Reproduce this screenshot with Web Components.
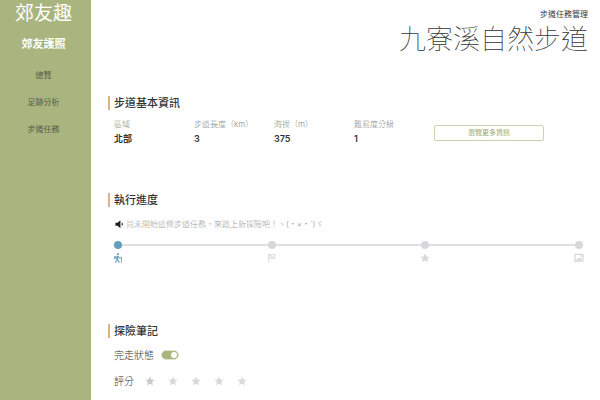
<!DOCTYPE html>
<html lang="zh-Hant">
<head>
<meta charset="utf-8">
<meta name="viewport" content="width=device-width, initial-scale=1">
<title>郊友趣</title>
<style>
body { margin: 0; font-family: Inter, "Noto Sans CJK TC", sans-serif; font-size: 8px; line-height: 12px; color: #333; background: #fff; --green: #a9b57f; }
</style>
</head>
<body>
<trail-app></trail-app>
<script>
const define = (name, html, setup) => customElements.define(name, class extends HTMLElement {
  connectedCallback() {
    if (this.shadowRoot) return;
    const t = document.createElement('template');
    t.innerHTML = html;
    this.attachShadow({ mode: 'open' }).append(t.content.cloneNode(true));
    if (setup) setup(this, this.shadowRoot);
  }
});

const icons = {
  sound: '<path d="M1 9h5l7-6v19l-7-6H1z"/><path d="M16 8q6 4.500 0 9z"/>',
  hiker: '<circle cx="12" cy="2.500" r="2.500"/><path d="M8 7q3-2 5 0l3 4h4v2h-5l-2-2-1 4 3 4 1 5h-2.500l-1-4-5-4zM3 8l4-1-1 8-4-1zM8 17l2 2-2 3-3 2-1-2 3-2zM19 9h2v15h-2z"/>',
  flag: '<path fill-rule="evenodd" d="M3 1h2.500v2H21l-3 5.500 3 5.500H5.500v9H3zM5.500 5v7H17l-2-3.500L17 5z"/><path d="M6 5h4v3.500H6zM10 8.500h4V12h-4z"/>',
  star: '<path d="M12 1l3.300 7.200 7.700.9-5.700 5.300 1.500 7.800L12 18.300l-6.800 3.900 1.500-7.800L1 9.100l7.700-.9z"/>',
  photo: '<path fill-rule="evenodd" d="M3 2h18q2 0 2 2v15q0 2-2 2H5l-4 2V4q0-2 2-2zM4 5v13h16V5z"/><path d="M4 19l6-8 3 3 3-3 4 7z"/><path d="M13 4h8v7l-3-3-3 3-1-1 3-3z"/>'
};
define('app-icon', `<style>
  :host { display: inline-flex; flex: none; width: 10px; height: 10px; }
  svg { width: 100%; height: 100%; fill: currentColor; }
</style><svg viewBox="0 0 24 24" aria-hidden="true"></svg>`,
  (host, root) => { root.querySelector('svg').innerHTML = icons[host.getAttribute('name')]; });

define('side-nav', `<style>
  :host { display: block; background: var(--green); text-align: center; padding-right: 4px; }
  .brand { color: #fff; font-size: 19px; line-height: 28px; }
  h2 { margin: 8px 0 0; color: #fff; font-size: 11px; line-height: 16px; font-weight: 700; }
  nav { display: grid; gap: 15px; margin-top: 17px; }
  a { color: #555a47; text-decoration: none; }
</style>
<div class="brand">郊友趣</div><h2>郊友護照</h2>
<nav><a href="#overview">總覽</a><a href="#analysis">足跡分析</a><a href="#tasks">步道任務</a></nav>`);

define('page-title', `<style>
  :host { display: block; text-align: right; }
  p { margin: 0; }
  h1 { margin: 0; font-size: 27px; line-height: 40px; font-weight: 100; }
</style><p>步道任務管理</p><h1><slot></slot></h1>`);

define('content-section', `<style>
  :host { display: block; }
  h2 { margin: 0; padding-left: 4px; border-left: 2px solid #e6b17e; font-size: 11px; line-height: 14px; font-weight: 500; }
  div { padding-left: 6px; }
</style><h2></h2><div><slot></slot></div>`,
  (host, root) => { root.querySelector('h2').textContent = host.getAttribute('heading'); });

define('trail-info', `<style>
  :host { display: grid; grid-template-columns: repeat(4, 80px) 1fr; margin-top: 8px; }
  dl, dd { margin: 0; }
  dt { color: #888; font-weight: 300; white-space: nowrap; }
  dd { font-size: 9px; line-height: 18px; font-weight: 600; }
  button { align-self: center; width: 110px; height: 16px; padding: 0; background: #fff; border: 1px solid #cbd2b1; border-radius: 2px; color: #98a66b; font: inherit; font-size: 7px; line-height: 12px; }
</style>
<dl><dt>區域</dt><dd>北部</dd></dl>
<dl><dt>步道長度（km）</dt><dd>3</dd></dl>
<dl><dt>海拔（m）</dt><dd>375</dd></dl>
<dl><dt>難易度分級</dt><dd>1</dd></dl>
<button type="button">瀏覽更多資訊</button>`);

define('trail-progress', `<style>
  :host { display: block; margin-top: 11px; }
  p { display: flex; align-items: center; gap: 1px; margin: 0 0 11px; padding-left: 1px; color: #999; font-weight: 300; white-space: nowrap; }
  p app-icon { color: #222; }
  ol { display: flex; justify-content: space-between; list-style: none; margin: 0; padding: 0; background: linear-gradient(#e0e0e4, #e0e0e4) 4px 3px / calc(100% - 8px) 2px no-repeat; color: #d8d8dc; }
  li { display: flex; flex-direction: column; align-items: center; gap: 4px; width: 8px; }
  li::before { content: ""; width: 8px; height: 8px; border-radius: 50%; background: currentColor; }
  .current { color: #669fbe; }
</style>
<p><app-icon name="sound"></app-icon><span>尚未開始這條步道任務，來踏上新探險吧！ヽ(・×・´)ゞ</span></p>
<ol><li class="current"><app-icon name="hiker"></app-icon></li><li><app-icon name="flag"></app-icon></li><li><app-icon name="star"></app-icon></li><li><app-icon name="photo"></app-icon></li></ol>`);

define('trail-notes', `<style>
  :host { display: grid; gap: 10px; margin-top: 9px; font-size: 10px; line-height: 16px; font-weight: 300; }
  .row { display: flex; align-items: center; }
  .state { gap: 7px; }
  input { appearance: none; display: flex; align-items: center; justify-content: flex-end; width: 18px; height: 10px; margin: 0; padding: 1px; box-sizing: border-box; border: 1px solid #dfe3d0; border-radius: 5px; background: var(--green); }
  input::before { content: ""; width: 6px; height: 6px; border-radius: 50%; background: #fff; }
  input:not(:checked) { justify-content: flex-start; background: #ccc; }
  .rating { gap: 11px; }
  .stars { display: flex; gap: 13px; color: #dadade; }
  button { display: flex; padding: 0; border: 0; background: none; color: inherit; }
  button:first-child { color: #c9c9cd; }
</style>
<div class="row state"><label for="done">完走狀態</label><input id="done" type="checkbox" role="switch" checked></div>
<div class="row rating"><span id="score">評分</span><div class="stars" role="group" aria-labelledby="score"></div></div>`,
  (host, root) => {
    root.querySelector('.stars').innerHTML = [1, 2, 3, 4, 5].map(n =>
      `<button type="button" aria-label="${n}"><app-icon name="star"></app-icon></button>`).join('');
  });

define('trail-app', `<style>
  :host { display: grid; grid-template-columns: 91px 1fr; min-height: 100vh; }
  main { padding: 8px 12px 0 17px; }
  .info { margin-top: 36px; }
  .progress { margin-top: 45px; padding-right: 5px; }
  .notes { margin-top: 61px; }
</style>
<side-nav></side-nav>
<main>
  <page-title>九寮溪自然步道</page-title>
  <content-section class="info" heading="步道基本資訊"><trail-info></trail-info></content-section>
  <content-section class="progress" heading="執行進度"><trail-progress></trail-progress></content-section>
  <content-section class="notes" heading="探險筆記"><trail-notes></trail-notes></content-section>
</main>`);
</script>
</body>
</html>
